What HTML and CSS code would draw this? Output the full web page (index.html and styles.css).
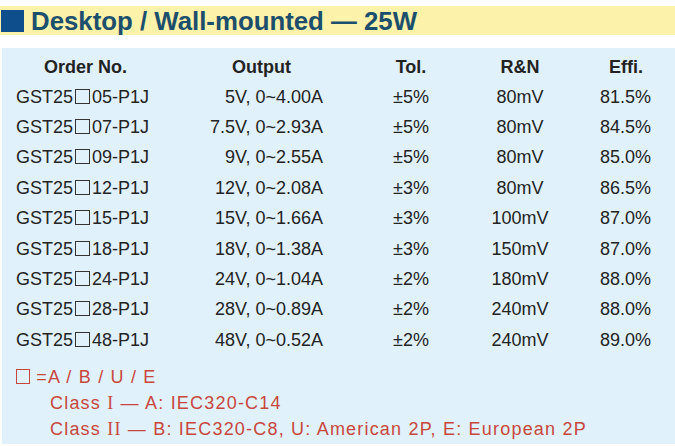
FILE: index.html
```html
<!DOCTYPE html>
<html lang="en">
<head>
  <meta charset="UTF-8">
  <meta name="viewport" content="width=device-width, initial-scale=1.0">
  <title>Desktop / Wall-mounted — 25W</title>
  <link rel="stylesheet" href="styles.css">
</head>
<body>
  <header class="banner">
    <span class="mark"></span>
    <h1>Desktop / Wall-mounted — 25W</h1>
  </header>

  <div class="panel">
    <div class="row head">
      <div class="c-order">Order No.</div>
      <div class="c-out">Output</div>
      <div class="c-tol">Tol.</div>
      <div class="c-rn">R&amp;N</div>
      <div class="c-eff">Effi.</div>
    </div>

    <div class="row"><div class="c-order">GST25<span class="box"></span>05-P1J</div><div class="c-out">5V, 0~4.00A</div><div class="c-tol">±5%</div><div class="c-rn">80mV</div><div class="c-eff">81.5%</div></div>
    <div class="row"><div class="c-order">GST25<span class="box"></span>07-P1J</div><div class="c-out">7.5V, 0~2.93A</div><div class="c-tol">±5%</div><div class="c-rn">80mV</div><div class="c-eff">84.5%</div></div>
    <div class="row"><div class="c-order">GST25<span class="box"></span>09-P1J</div><div class="c-out">9V, 0~2.55A</div><div class="c-tol">±5%</div><div class="c-rn">80mV</div><div class="c-eff">85.0%</div></div>
    <div class="row"><div class="c-order">GST25<span class="box"></span>12-P1J</div><div class="c-out">12V, 0~2.08A</div><div class="c-tol">±3%</div><div class="c-rn">80mV</div><div class="c-eff">86.5%</div></div>
    <div class="row"><div class="c-order">GST25<span class="box"></span>15-P1J</div><div class="c-out">15V, 0~1.66A</div><div class="c-tol">±3%</div><div class="c-rn">100mV</div><div class="c-eff">87.0%</div></div>
    <div class="row"><div class="c-order">GST25<span class="box"></span>18-P1J</div><div class="c-out">18V, 0~1.38A</div><div class="c-tol">±3%</div><div class="c-rn">150mV</div><div class="c-eff">87.0%</div></div>
    <div class="row"><div class="c-order">GST25<span class="box"></span>24-P1J</div><div class="c-out">24V, 0~1.04A</div><div class="c-tol">±2%</div><div class="c-rn">180mV</div><div class="c-eff">88.0%</div></div>
    <div class="row"><div class="c-order">GST25<span class="box"></span>28-P1J</div><div class="c-out">28V, 0~0.89A</div><div class="c-tol">±2%</div><div class="c-rn">240mV</div><div class="c-eff">88.0%</div></div>
    <div class="row"><div class="c-order">GST25<span class="box"></span>48-P1J</div><div class="c-out">48V, 0~0.52A</div><div class="c-tol">±2%</div><div class="c-rn">240mV</div><div class="c-eff">89.0%</div></div>

    <div class="notes">
      <div><span class="box red"></span> =A / B / U / E</div>
      <div class="indent">Class <span class="roman">I</span> — A: IEC320-C14</div>
      <div class="indent">Class <span class="roman">II</span> — B: IEC320-C8, U: American 2P, E: European 2P</div>
    </div>
  </div>
</body>
</html>
```

FILE: styles.css
```css
body {
  margin: 0;
  background-color: #ffffff;
  font-family: "Liberation Sans", Arial, sans-serif;
  color: #232323;
}
.banner {
  margin-top: 6px;
  height: 29px;
  background-color: #fcf2a9;
  display: flex;
  align-items: center;
}
.mark {
  width: 23px;
  height: 22px;
  margin-left: 1px;
  margin-right: 7px;
  background-color: #0e4e8c;
}
.banner h1 {
  margin: 0;
  padding-top: 2px;
  font-size: 25.8px;
  line-height: 29px;
  font-weight: bold;
  color: #1c4f6d;
}
.panel {
  margin: 13px 0 0 2px;
  padding: 4px 0 2px 14px;
  background-color: #e1f1fc;
}
.row {
  display: grid;
  grid-template-columns: 184px 123px 138px 118px 72px;
  height: 30.4px;
  align-items: center;
  font-size: 18px;
}
.row.head {
  height: 30px;
  font-weight: bold;
}
.c-order {
  white-space: nowrap;
}
.head .c-order {
  padding-left: 28px;
}
.c-out {
  text-align: right;
  white-space: nowrap;
}
.head .c-out {
  text-align: center;
}
.c-tol {
  padding-left: 38px;
  text-align: center;
}
.c-rn {
  text-align: center;
}
.c-eff {
  text-align: right;
}
.head .c-eff {
  padding-right: 8px;
}
.box {
  display: inline-block;
  width: 13px;
  height: 13px;
  border: 1.3px solid #333;
  margin: 0 2px 0 2px;
  vertical-align: -1px;
}
.notes {
  margin-top: 8px;
  color: #c8473d;
  font-size: 18px;
  line-height: 26px;
  letter-spacing: 1.2px;
}
.box.red {
  border-color: #c8473d;
  margin: 0;
  width: 12px;
}
.indent {
  padding-left: 34px;
}
.roman {
  font-family: "Liberation Serif", "Times New Roman", serif;
}
```
